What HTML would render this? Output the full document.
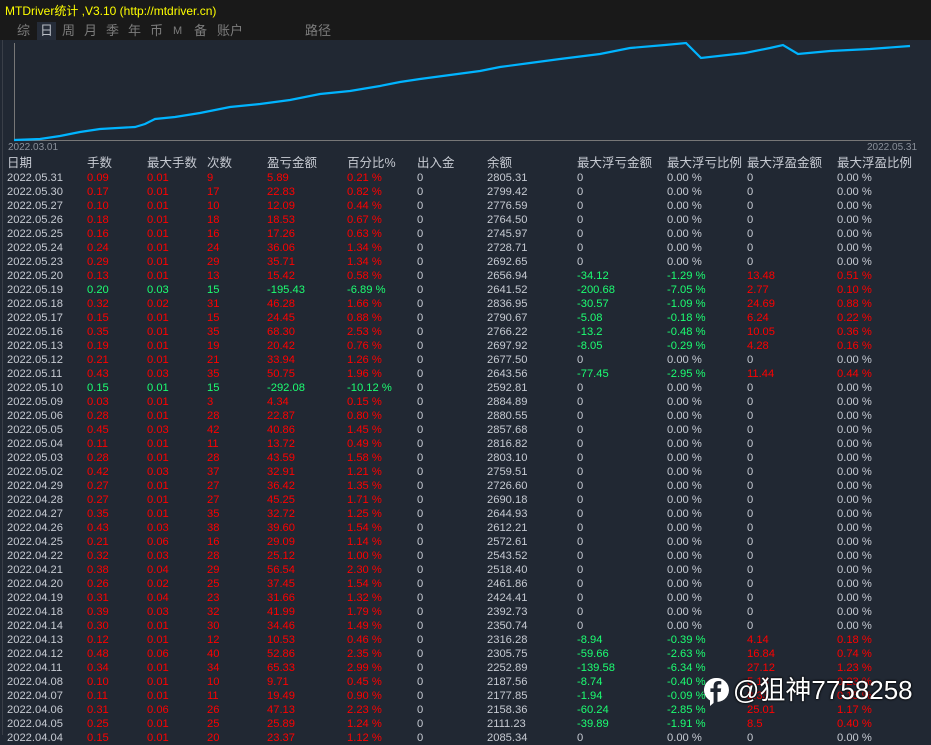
<!DOCTYPE html>
<html><head><meta charset="utf-8"><style>
*{margin:0;padding:0;box-sizing:border-box}
body{width:931px;height:735px;overflow:hidden;background:#212833;font-family:"Liberation Sans","Noto Sans CJK SC",sans-serif;position:relative}
#top{position:absolute;left:0;top:0;width:931px;height:40px;background:#191919}
#title{position:absolute;left:5px;top:2px;color:#ffff00;font-size:12px;white-space:nowrap}
#tabs{position:absolute;left:0;top:22px;height:18px;width:400px;font-size:13px;color:#7c7c7c;white-space:nowrap}
#tabs span{position:absolute;top:0;line-height:18px;white-space:nowrap}
.sel{background:#252c38;color:#b8bcc4;padding:0 3px}
#lb{position:absolute;left:2px;top:40px;width:1px;height:695px;background:#3a3f48}
svg{position:absolute;left:0;top:0}
.r{position:absolute;left:0;height:14px;width:931px;font-size:11.2px;line-height:14px;color:#c6cad2;white-space:nowrap}
.r span{position:absolute;top:0}
.R{color:#ff0000}.G{color:#1cff72}
.c1{left:7px}.c2{left:87px}.c3{left:147px}.c4{left:207px}.c5{left:267px}.c6{left:347px}.c7{left:417px}.c8{left:487px}.c9{left:577px}.c10{left:667px}.c11{left:747px}.c12{left:837px}
.h{font-size:12.5px;color:#c6cad2}
#wm{position:absolute;left:703px;top:674px;width:228px;height:32px;color:#fff;font-size:26px;line-height:32px;white-space:nowrap;text-shadow:0 0 2px #000,0 0 2px #000}
</style></head><body>
<div id="top"></div>
<div id="title">MTDriver统计 ,V3.10 (http://mtdriver.cn)</div>
<div id="tabs">
<span style="left:17px">综</span><span class="sel" style="left:37px">日</span><span style="left:62px">周</span><span style="left:84px">月</span><span style="left:106px">季</span><span style="left:128px">年</span><span style="left:150px">币</span><span style="left:173px;font-size:11px">M</span><span style="left:194px">备</span><span style="left:217px">账户</span><span style="left:305px">路径</span>
</div>
<div id="lb"></div>
<svg width="931" height="160">
<line x1="14.5" y1="43" x2="14.5" y2="141" stroke="#777" stroke-width="1"/>
<line x1="14" y1="140.5" x2="911" y2="140.5" stroke="#777" stroke-width="1"/>
<polyline fill="none" stroke="#00b4ff" stroke-width="2.2" points="14,140 40,139 60,136 80,132 100,129 135,127 145,124 155,119 175,117 200,113 230,107 260,104 290,100 320,94 350,91 380,86 400,82 420,79 450,75 480,71 500,67 530,63 560,59 600,54 630,48 665,45 686,43 701,58 745,53 770,48 783,45 798,54 830,51 870,49 910,46"/>
<text x="8" y="150" font-size="10" fill="#8a909a" font-family="Liberation Sans">2022.03.01</text>
<text x="867" y="150" font-size="10" fill="#8a909a" font-family="Liberation Sans">2022.05.31</text>
</svg>
<div class="r h" style="top:156px"><span class="c1">日期</span><span class="c2">手数</span><span class="c3">最大手数</span><span class="c4">次数</span><span class="c5">盈亏金额</span><span class="c6">百分比%</span><span class="c7">出入金</span><span class="c8">余额</span><span class="c9">最大浮亏金额</span><span class="c10">最大浮亏比例</span><span class="c11">最大浮盈金额</span><span class="c12">最大浮盈比例</span></div>

<div class="r" style="top:171px"><span class="c1">2022.05.31</span><span class="c2 R">0.09</span><span class="c3 R">0.01</span><span class="c4 R">9</span><span class="c5 R">5.89</span><span class="c6 R">0.21 %</span><span class="c7">0</span><span class="c8">2805.31</span><span class="c9">0</span><span class="c10">0.00 %</span><span class="c11">0</span><span class="c12">0.00 %</span></div>
<div class="r" style="top:185px"><span class="c1">2022.05.30</span><span class="c2 R">0.17</span><span class="c3 R">0.01</span><span class="c4 R">17</span><span class="c5 R">22.83</span><span class="c6 R">0.82 %</span><span class="c7">0</span><span class="c8">2799.42</span><span class="c9">0</span><span class="c10">0.00 %</span><span class="c11">0</span><span class="c12">0.00 %</span></div>
<div class="r" style="top:199px"><span class="c1">2022.05.27</span><span class="c2 R">0.10</span><span class="c3 R">0.01</span><span class="c4 R">10</span><span class="c5 R">12.09</span><span class="c6 R">0.44 %</span><span class="c7">0</span><span class="c8">2776.59</span><span class="c9">0</span><span class="c10">0.00 %</span><span class="c11">0</span><span class="c12">0.00 %</span></div>
<div class="r" style="top:213px"><span class="c1">2022.05.26</span><span class="c2 R">0.18</span><span class="c3 R">0.01</span><span class="c4 R">18</span><span class="c5 R">18.53</span><span class="c6 R">0.67 %</span><span class="c7">0</span><span class="c8">2764.50</span><span class="c9">0</span><span class="c10">0.00 %</span><span class="c11">0</span><span class="c12">0.00 %</span></div>
<div class="r" style="top:227px"><span class="c1">2022.05.25</span><span class="c2 R">0.16</span><span class="c3 R">0.01</span><span class="c4 R">16</span><span class="c5 R">17.26</span><span class="c6 R">0.63 %</span><span class="c7">0</span><span class="c8">2745.97</span><span class="c9">0</span><span class="c10">0.00 %</span><span class="c11">0</span><span class="c12">0.00 %</span></div>
<div class="r" style="top:241px"><span class="c1">2022.05.24</span><span class="c2 R">0.24</span><span class="c3 R">0.01</span><span class="c4 R">24</span><span class="c5 R">36.06</span><span class="c6 R">1.34 %</span><span class="c7">0</span><span class="c8">2728.71</span><span class="c9">0</span><span class="c10">0.00 %</span><span class="c11">0</span><span class="c12">0.00 %</span></div>
<div class="r" style="top:255px"><span class="c1">2022.05.23</span><span class="c2 R">0.29</span><span class="c3 R">0.01</span><span class="c4 R">29</span><span class="c5 R">35.71</span><span class="c6 R">1.34 %</span><span class="c7">0</span><span class="c8">2692.65</span><span class="c9">0</span><span class="c10">0.00 %</span><span class="c11">0</span><span class="c12">0.00 %</span></div>
<div class="r" style="top:269px"><span class="c1">2022.05.20</span><span class="c2 R">0.13</span><span class="c3 R">0.01</span><span class="c4 R">13</span><span class="c5 R">15.42</span><span class="c6 R">0.58 %</span><span class="c7">0</span><span class="c8">2656.94</span><span class="c9 G">-34.12</span><span class="c10 G">-1.29 %</span><span class="c11 R">13.48</span><span class="c12 R">0.51 %</span></div>
<div class="r" style="top:283px"><span class="c1">2022.05.19</span><span class="c2 G">0.20</span><span class="c3 G">0.03</span><span class="c4 G">15</span><span class="c5 G">-195.43</span><span class="c6 G">-6.89 %</span><span class="c7">0</span><span class="c8">2641.52</span><span class="c9 G">-200.68</span><span class="c10 G">-7.05 %</span><span class="c11 R">2.77</span><span class="c12 R">0.10 %</span></div>
<div class="r" style="top:297px"><span class="c1">2022.05.18</span><span class="c2 R">0.32</span><span class="c3 R">0.02</span><span class="c4 R">31</span><span class="c5 R">46.28</span><span class="c6 R">1.66 %</span><span class="c7">0</span><span class="c8">2836.95</span><span class="c9 G">-30.57</span><span class="c10 G">-1.09 %</span><span class="c11 R">24.69</span><span class="c12 R">0.88 %</span></div>
<div class="r" style="top:311px"><span class="c1">2022.05.17</span><span class="c2 R">0.15</span><span class="c3 R">0.01</span><span class="c4 R">15</span><span class="c5 R">24.45</span><span class="c6 R">0.88 %</span><span class="c7">0</span><span class="c8">2790.67</span><span class="c9 G">-5.08</span><span class="c10 G">-0.18 %</span><span class="c11 R">6.24</span><span class="c12 R">0.22 %</span></div>
<div class="r" style="top:325px"><span class="c1">2022.05.16</span><span class="c2 R">0.35</span><span class="c3 R">0.01</span><span class="c4 R">35</span><span class="c5 R">68.30</span><span class="c6 R">2.53 %</span><span class="c7">0</span><span class="c8">2766.22</span><span class="c9 G">-13.2</span><span class="c10 G">-0.48 %</span><span class="c11 R">10.05</span><span class="c12 R">0.36 %</span></div>
<div class="r" style="top:339px"><span class="c1">2022.05.13</span><span class="c2 R">0.19</span><span class="c3 R">0.01</span><span class="c4 R">19</span><span class="c5 R">20.42</span><span class="c6 R">0.76 %</span><span class="c7">0</span><span class="c8">2697.92</span><span class="c9 G">-8.05</span><span class="c10 G">-0.29 %</span><span class="c11 R">4.28</span><span class="c12 R">0.16 %</span></div>
<div class="r" style="top:353px"><span class="c1">2022.05.12</span><span class="c2 R">0.21</span><span class="c3 R">0.01</span><span class="c4 R">21</span><span class="c5 R">33.94</span><span class="c6 R">1.26 %</span><span class="c7">0</span><span class="c8">2677.50</span><span class="c9">0</span><span class="c10">0.00 %</span><span class="c11">0</span><span class="c12">0.00 %</span></div>
<div class="r" style="top:367px"><span class="c1">2022.05.11</span><span class="c2 R">0.43</span><span class="c3 R">0.03</span><span class="c4 R">35</span><span class="c5 R">50.75</span><span class="c6 R">1.96 %</span><span class="c7">0</span><span class="c8">2643.56</span><span class="c9 G">-77.45</span><span class="c10 G">-2.95 %</span><span class="c11 R">11.44</span><span class="c12 R">0.44 %</span></div>
<div class="r" style="top:381px"><span class="c1">2022.05.10</span><span class="c2 G">0.15</span><span class="c3 G">0.01</span><span class="c4 G">15</span><span class="c5 G">-292.08</span><span class="c6 G">-10.12 %</span><span class="c7">0</span><span class="c8">2592.81</span><span class="c9">0</span><span class="c10">0.00 %</span><span class="c11">0</span><span class="c12">0.00 %</span></div>
<div class="r" style="top:395px"><span class="c1">2022.05.09</span><span class="c2 R">0.03</span><span class="c3 R">0.01</span><span class="c4 R">3</span><span class="c5 R">4.34</span><span class="c6 R">0.15 %</span><span class="c7">0</span><span class="c8">2884.89</span><span class="c9">0</span><span class="c10">0.00 %</span><span class="c11">0</span><span class="c12">0.00 %</span></div>
<div class="r" style="top:409px"><span class="c1">2022.05.06</span><span class="c2 R">0.28</span><span class="c3 R">0.01</span><span class="c4 R">28</span><span class="c5 R">22.87</span><span class="c6 R">0.80 %</span><span class="c7">0</span><span class="c8">2880.55</span><span class="c9">0</span><span class="c10">0.00 %</span><span class="c11">0</span><span class="c12">0.00 %</span></div>
<div class="r" style="top:423px"><span class="c1">2022.05.05</span><span class="c2 R">0.45</span><span class="c3 R">0.03</span><span class="c4 R">42</span><span class="c5 R">40.86</span><span class="c6 R">1.45 %</span><span class="c7">0</span><span class="c8">2857.68</span><span class="c9">0</span><span class="c10">0.00 %</span><span class="c11">0</span><span class="c12">0.00 %</span></div>
<div class="r" style="top:437px"><span class="c1">2022.05.04</span><span class="c2 R">0.11</span><span class="c3 R">0.01</span><span class="c4 R">11</span><span class="c5 R">13.72</span><span class="c6 R">0.49 %</span><span class="c7">0</span><span class="c8">2816.82</span><span class="c9">0</span><span class="c10">0.00 %</span><span class="c11">0</span><span class="c12">0.00 %</span></div>
<div class="r" style="top:451px"><span class="c1">2022.05.03</span><span class="c2 R">0.28</span><span class="c3 R">0.01</span><span class="c4 R">28</span><span class="c5 R">43.59</span><span class="c6 R">1.58 %</span><span class="c7">0</span><span class="c8">2803.10</span><span class="c9">0</span><span class="c10">0.00 %</span><span class="c11">0</span><span class="c12">0.00 %</span></div>
<div class="r" style="top:465px"><span class="c1">2022.05.02</span><span class="c2 R">0.42</span><span class="c3 R">0.03</span><span class="c4 R">37</span><span class="c5 R">32.91</span><span class="c6 R">1.21 %</span><span class="c7">0</span><span class="c8">2759.51</span><span class="c9">0</span><span class="c10">0.00 %</span><span class="c11">0</span><span class="c12">0.00 %</span></div>
<div class="r" style="top:479px"><span class="c1">2022.04.29</span><span class="c2 R">0.27</span><span class="c3 R">0.01</span><span class="c4 R">27</span><span class="c5 R">36.42</span><span class="c6 R">1.35 %</span><span class="c7">0</span><span class="c8">2726.60</span><span class="c9">0</span><span class="c10">0.00 %</span><span class="c11">0</span><span class="c12">0.00 %</span></div>
<div class="r" style="top:493px"><span class="c1">2022.04.28</span><span class="c2 R">0.27</span><span class="c3 R">0.01</span><span class="c4 R">27</span><span class="c5 R">45.25</span><span class="c6 R">1.71 %</span><span class="c7">0</span><span class="c8">2690.18</span><span class="c9">0</span><span class="c10">0.00 %</span><span class="c11">0</span><span class="c12">0.00 %</span></div>
<div class="r" style="top:507px"><span class="c1">2022.04.27</span><span class="c2 R">0.35</span><span class="c3 R">0.01</span><span class="c4 R">35</span><span class="c5 R">32.72</span><span class="c6 R">1.25 %</span><span class="c7">0</span><span class="c8">2644.93</span><span class="c9">0</span><span class="c10">0.00 %</span><span class="c11">0</span><span class="c12">0.00 %</span></div>
<div class="r" style="top:521px"><span class="c1">2022.04.26</span><span class="c2 R">0.43</span><span class="c3 R">0.03</span><span class="c4 R">38</span><span class="c5 R">39.60</span><span class="c6 R">1.54 %</span><span class="c7">0</span><span class="c8">2612.21</span><span class="c9">0</span><span class="c10">0.00 %</span><span class="c11">0</span><span class="c12">0.00 %</span></div>
<div class="r" style="top:535px"><span class="c1">2022.04.25</span><span class="c2 R">0.21</span><span class="c3 R">0.06</span><span class="c4 R">16</span><span class="c5 R">29.09</span><span class="c6 R">1.14 %</span><span class="c7">0</span><span class="c8">2572.61</span><span class="c9">0</span><span class="c10">0.00 %</span><span class="c11">0</span><span class="c12">0.00 %</span></div>
<div class="r" style="top:549px"><span class="c1">2022.04.22</span><span class="c2 R">0.32</span><span class="c3 R">0.03</span><span class="c4 R">28</span><span class="c5 R">25.12</span><span class="c6 R">1.00 %</span><span class="c7">0</span><span class="c8">2543.52</span><span class="c9">0</span><span class="c10">0.00 %</span><span class="c11">0</span><span class="c12">0.00 %</span></div>
<div class="r" style="top:563px"><span class="c1">2022.04.21</span><span class="c2 R">0.38</span><span class="c3 R">0.04</span><span class="c4 R">29</span><span class="c5 R">56.54</span><span class="c6 R">2.30 %</span><span class="c7">0</span><span class="c8">2518.40</span><span class="c9">0</span><span class="c10">0.00 %</span><span class="c11">0</span><span class="c12">0.00 %</span></div>
<div class="r" style="top:577px"><span class="c1">2022.04.20</span><span class="c2 R">0.26</span><span class="c3 R">0.02</span><span class="c4 R">25</span><span class="c5 R">37.45</span><span class="c6 R">1.54 %</span><span class="c7">0</span><span class="c8">2461.86</span><span class="c9">0</span><span class="c10">0.00 %</span><span class="c11">0</span><span class="c12">0.00 %</span></div>
<div class="r" style="top:591px"><span class="c1">2022.04.19</span><span class="c2 R">0.31</span><span class="c3 R">0.04</span><span class="c4 R">23</span><span class="c5 R">31.66</span><span class="c6 R">1.32 %</span><span class="c7">0</span><span class="c8">2424.41</span><span class="c9">0</span><span class="c10">0.00 %</span><span class="c11">0</span><span class="c12">0.00 %</span></div>
<div class="r" style="top:605px"><span class="c1">2022.04.18</span><span class="c2 R">0.39</span><span class="c3 R">0.03</span><span class="c4 R">32</span><span class="c5 R">41.99</span><span class="c6 R">1.79 %</span><span class="c7">0</span><span class="c8">2392.73</span><span class="c9">0</span><span class="c10">0.00 %</span><span class="c11">0</span><span class="c12">0.00 %</span></div>
<div class="r" style="top:619px"><span class="c1">2022.04.14</span><span class="c2 R">0.30</span><span class="c3 R">0.01</span><span class="c4 R">30</span><span class="c5 R">34.46</span><span class="c6 R">1.49 %</span><span class="c7">0</span><span class="c8">2350.74</span><span class="c9">0</span><span class="c10">0.00 %</span><span class="c11">0</span><span class="c12">0.00 %</span></div>
<div class="r" style="top:633px"><span class="c1">2022.04.13</span><span class="c2 R">0.12</span><span class="c3 R">0.01</span><span class="c4 R">12</span><span class="c5 R">10.53</span><span class="c6 R">0.46 %</span><span class="c7">0</span><span class="c8">2316.28</span><span class="c9 G">-8.94</span><span class="c10 G">-0.39 %</span><span class="c11 R">4.14</span><span class="c12 R">0.18 %</span></div>
<div class="r" style="top:647px"><span class="c1">2022.04.12</span><span class="c2 R">0.48</span><span class="c3 R">0.06</span><span class="c4 R">40</span><span class="c5 R">52.86</span><span class="c6 R">2.35 %</span><span class="c7">0</span><span class="c8">2305.75</span><span class="c9 G">-59.66</span><span class="c10 G">-2.63 %</span><span class="c11 R">16.84</span><span class="c12 R">0.74 %</span></div>
<div class="r" style="top:661px"><span class="c1">2022.04.11</span><span class="c2 R">0.34</span><span class="c3 R">0.01</span><span class="c4 R">34</span><span class="c5 R">65.33</span><span class="c6 R">2.99 %</span><span class="c7">0</span><span class="c8">2252.89</span><span class="c9 G">-139.58</span><span class="c10 G">-6.34 %</span><span class="c11 R">27.12</span><span class="c12 R">1.23 %</span></div>
<div class="r" style="top:675px"><span class="c1">2022.04.08</span><span class="c2 R">0.10</span><span class="c3 R">0.01</span><span class="c4 R">10</span><span class="c5 R">9.71</span><span class="c6 R">0.45 %</span><span class="c7">0</span><span class="c8">2187.56</span><span class="c9 G">-8.74</span><span class="c10 G">-0.40 %</span><span class="c11 R">5.14</span><span class="c12 R">0.23 %</span></div>
<div class="r" style="top:689px"><span class="c1">2022.04.07</span><span class="c2 R">0.11</span><span class="c3 R">0.01</span><span class="c4 R">11</span><span class="c5 R">19.49</span><span class="c6 R">0.90 %</span><span class="c7">0</span><span class="c8">2177.85</span><span class="c9 G">-1.94</span><span class="c10 G">-0.09 %</span><span class="c11 R">3.33</span><span class="c12 R">0.15 %</span></div>
<div class="r" style="top:703px"><span class="c1">2022.04.06</span><span class="c2 R">0.31</span><span class="c3 R">0.06</span><span class="c4 R">26</span><span class="c5 R">47.13</span><span class="c6 R">2.23 %</span><span class="c7">0</span><span class="c8">2158.36</span><span class="c9 G">-60.24</span><span class="c10 G">-2.85 %</span><span class="c11 R">25.01</span><span class="c12 R">1.17 %</span></div>
<div class="r" style="top:717px"><span class="c1">2022.04.05</span><span class="c2 R">0.25</span><span class="c3 R">0.01</span><span class="c4 R">25</span><span class="c5 R">25.89</span><span class="c6 R">1.24 %</span><span class="c7">0</span><span class="c8">2111.23</span><span class="c9 G">-39.89</span><span class="c10 G">-1.91 %</span><span class="c11 R">8.5</span><span class="c12 R">0.40 %</span></div>
<div class="r" style="top:731px"><span class="c1">2022.04.04</span><span class="c2 R">0.15</span><span class="c3 R">0.01</span><span class="c4 R">20</span><span class="c5 R">23.37</span><span class="c6 R">1.12 %</span><span class="c7">0</span><span class="c8">2085.34</span><span class="c9">0</span><span class="c10">0.00 %</span><span class="c11">0</span><span class="c12">0.00 %</span></div>

<div id="wm">
<svg style="position:absolute;left:0;top:3px" width="26" height="30" viewBox="0 0 26 30"><path d="M13 1a12 12 0 0 0-6 22.4V29l5-4.2A12 12 0 1 0 13 1z" fill="#fff"/><path d="M14.5 26V15h3.2l.5-3.6h-3.7V9.2c0-1 .3-1.8 1.8-1.8h2V4.2c-.4 0-1.5-.2-2.9-.2-2.9 0-4.8 1.7-4.8 5v2.4H7.4V15h3.2v11z" fill="#212833"/></svg>
<span style="position:absolute;left:30px;top:0;white-space:nowrap">@狙神7758258</span>
</div>
</body></html>
